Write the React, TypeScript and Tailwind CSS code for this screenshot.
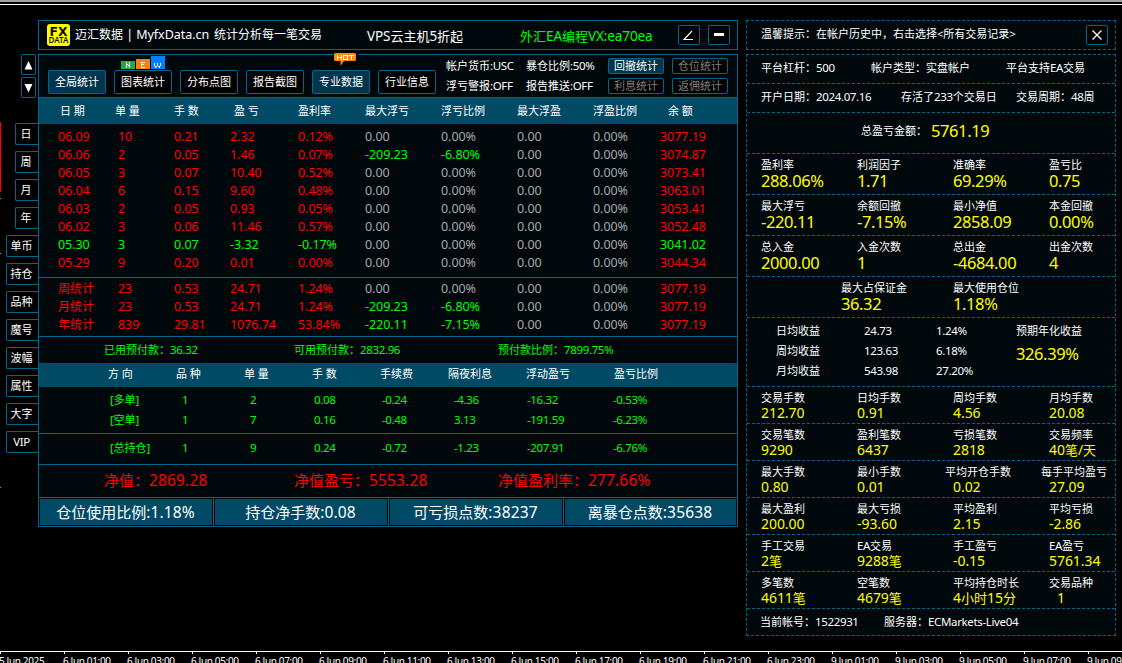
import React from "react";

type Size = "s" | "n" | "m" | "g" | "l" | "x";

const sizes: Record<Size, [string, string]> = {
  s: ["text-[11px]", "text-[11.5px] tracking-[-0.35px]"],
  n: ["text-[12px]", "text-[12.5px] tracking-[-0.05px]"],
  m: ["text-[13px]", "text-[13.5px] tracking-[-0.1px]"],
  g: ["text-[13px]", "text-[14px] tracking-[-0.05px]"],
  l: ["text-[15px]", "text-[15.5px] tracking-[0.15px]"],
  x: ["text-[16px]", "text-[16.5px] tracking-[-0.4px]"],
};

function T({ c, s = "s", className = "" }: { c: string; s?: Size; className?: string }) {
  const [cjk, latin] = sizes[s];
  const parts = c.match(/[\x20-\x7e]+|[^\x20-\x7e]+/g) ?? [];
  return (
    <span className={`block whitespace-pre leading-[18px] ${cjk} ${className}`}>
      {parts.map((p, i) =>
        /^[\x20-\x7e]/.test(p) ? (
          <span key={i} className={latin}>{p}</span>
        ) : (
          <span key={i}>{p}</span>
        )
      )}
    </span>
  );
}

const RED = "text-[#ff0000]";
const GREEN = "text-[#00ff00]";
const GRAY = "text-[#a9a9a9]";

const daily = [
  ["06.09", "10", "0.21", "2.32", "0.12%", "0.00", "0.00%", "3077.19"],
  ["06.06", "2", "0.05", "1.46", "0.07%", "-209.23", "-6.80%", "3074.87"],
  ["06.05", "3", "0.07", "10.40", "0.52%", "0.00", "0.00%", "3073.41"],
  ["06.04", "6", "0.15", "9.60", "0.48%", "0.00", "0.00%", "3063.01"],
  ["06.03", "2", "0.05", "0.93", "0.05%", "0.00", "0.00%", "3053.41"],
  ["06.02", "3", "0.06", "11.46", "0.57%", "0.00", "0.00%", "3052.48"],
  ["05.30", "3", "0.07", "-3.32", "-0.17%", "0.00", "0.00%", "3041.02"],
  ["05.29", "9", "0.20", "0.01", "0.00%", "0.00", "0.00%", "3044.34"],
];

const totals = [
  ["周统计", "23", "0.53", "24.71", "1.24%", "0.00", "0.00%", "3077.19"],
  ["月统计", "23", "0.53", "24.71", "1.24%", "-209.23", "-6.80%", "3077.19"],
  ["年统计", "839", "29.81", "1076.74", "53.84%", "-220.11", "-7.15%", "3077.19"],
];

function DataRow({ r }: { r: string[] }) {
  const main = r[3].startsWith("-") ? GREEN : RED;
  const draw = r[5].startsWith("-") ? GREEN : GRAY;
  const cells = [...r.slice(0, 7), "0.00", "0.00%", r[7]];
  return (
    <div className="grid h-[18px] grid-cols-[60px_56px_56px_68px_67px_76px_76px_76px_67px_70px] pl-[19px]">
      {cells.map((c, i) => (
        <T key={i} c={c} s="n" className={i < 5 || i === 9 ? main : i < 7 ? draw : GRAY} />
      ))}
    </div>
  );
}

function PositionRow({ r }: { r: string[] }) {
  return (
    <div className={`grid h-5 grid-cols-[72px_68px_64px_68px_72px_73px_86px_80px] items-center pl-[71px] ${GREEN}`}>
      {r.map((c, i) => <T key={i} c={c} />)}
    </div>
  );
}

function NavButton({ label, active }: { label: string; active?: boolean }) {
  return (
    <div className={`flex h-6 w-[58px] items-center justify-center rounded-[2px] border border-[#00668a] ${active ? "bg-[#00354e]" : "bg-black"}`}>
      <T c={label} />
    </div>
  );
}

function MiniButton({ label, active }: { label: string; active?: boolean }) {
  return (
    <div className={`flex h-4 w-14 items-center justify-center rounded-[2px] border border-[#00668a] ${active ? "bg-[#00354e]" : "bg-black text-[#808080]"}`}>
      <T c={label} />
    </div>
  );
}

const iconButton = "flex h-5 w-[22px] items-center justify-center rounded-[2px] border border-[#00668a] bg-black";

function Logo() {
  return (
    <svg width="23" height="22" viewBox="0 0 23 22" className="shrink-0">
      <rect width="23" height="22" rx="3" fill="#ffff00" />
      <text x="11.5" y="11.5" textAnchor="middle" fontFamily="DejaVu Sans" fontWeight="bold" fontSize="11.5" textLength="18" lengthAdjust="spacingAndGlyphs" fill="#101010">FX</text>
      <text x="11.5" y="19" textAnchor="middle" fontFamily="Noto Sans" fontWeight="600" fontSize="8.5" textLength="20" lengthAdjust="spacingAndGlyphs" fill="#101010">DATA</text>
    </svg>
  );
}

function NewBadge() {
  return (
    <svg width="44" height="13" viewBox="0 0 44 13" shapeRendering="crispEdges" className="absolute -top-[14px] left-[7px]">
      <rect x="0" y="5" width="14" height="8" fill="#28a745" />
      <rect x="15" y="3" width="14" height="10" fill="#ff7f0e" />
      <rect x="30" y="0" width="14" height="13" fill="#007fff" />
      <g fill="none" stroke="#fff">
        <path d="M5.5 6v6M8.500 6v6M6 8.500h1M7 9.500h1" />
        <path d="M20.500 6v6M20 6.500h4M20 8.500h3M20 11.500h4" />
        <path d="M33.500 7v3M34.500 10v2M35.500 10v1M36.500 7v3M37.500 10v1M38.500 10v2M39.500 7v3" />
      </g>
    </svg>
  );
}

function HotBadge() {
  return (
    <svg width="24" height="15" viewBox="0 0 24 15" className="absolute -top-[17px] left-[22px]">
      <rect width="24" height="15" fill="#000" />
      <path d="M1.500 0h19a1.500 1.500 0 0 1 1.500 1.500v5a1.500 1.500 0 0 1-1.500 1.500H10l-3.500 5V8h-5A1.500 1.500 0 0 1 0 6.500v-5A1.500 1.500 0 0 1 1.500 0z" fill="#ff8c00" />
      <g fill="none" stroke="#fff" shapeRendering="crispEdges">
        <path d="M3.500 2v5M7.500 2v5M4 4.500h3M9.500 2v5M13.500 2v5M10 2.500h3M10 6.500h3M15 2.500h5M17.500 3v4" />
      </g>
    </svg>
  );
}

const tabs = ["日", "周", "月", "年", "单币", "持仓", "品种", "魔号", "波幅", "属性", "大字", "VIP"];

function SideTabs() {
  return (
    <div className="flex w-[38px] flex-col items-end pt-[34px]">
      <div className="mr-[2px] flex flex-col gap-[2px]">
        {["M3.500 8.500h8L7.500 0z", "M3.500 0h8L7.500 8.500z"].map((d) => (
          <div key={d} className="flex h-[21px] w-[15px] items-center justify-center rounded-[2px] border border-[#00668a]">
            <svg width="15" height="9" viewBox="0 0 15 9" className="shrink-0 translate-y-px"><path d={d} fill="#fff" /></svg>
          </div>
        ))}
      </div>
      <div className="mt-[25px] flex flex-col items-end gap-[6px]">
        {tabs.map((t) => (
          <div key={t} className={`flex h-[22px] items-center justify-center rounded-l-[2px] border border-r-0 border-[#00668a] pr-[2px] ${t.length === 1 ? "w-[23px]" : "w-8"}`}>
            <T c={t} />
          </div>
        ))}
      </div>
    </div>
  );
}

function MainPanel() {
  return (
    <div className="flex w-[700px] flex-col">
      <div className="flex h-[30px] items-center border border-[#00668a] bg-[#00080c] pl-2">
        <Logo />
        <T c="迈汇数据 | MyfxData.cn" s="n" className="ml-[6px] w-[138px] -translate-x-px" />
        <T c="统计分析每一笔交易" s="n" className="w-[153px]" />
        <T c="VPS云主机5折起" s="m" className="mt-[2px] w-[153px]" />
        <T c="外汇EA编程VX:ea70ea" s="m" className={`mt-[2px] w-[158px] ${GREEN}`} />
        <div className={iconButton}>
          <svg width="20" height="18" viewBox="0 0 20 18"><path d="M13 5L5 13.500h9" fill="none" stroke="#fff" strokeWidth="1.100" /></svg>
        </div>
        <div className={`ml-2 ${iconButton}`}>
          <div className="mb-px h-[3px] w-[10px] bg-white" />
        </div>
      </div>

      <div className="mt-1 flex h-[473px] flex-col border border-[#00668a] bg-[#00080c]">
        <div className="flex h-[42px] pl-[9px]">
          <div className="mt-[15px] flex gap-2">
            <NavButton label="全局统计" active />
            <div className="relative"><NavButton label="图表统计" /><NewBadge /></div>
            <NavButton label="分布点图" />
            <NavButton label="报告截图" />
            <div className="relative"><NavButton label="专业数据" active /><HotBadge /></div>
            <NavButton label="行业信息" />
          </div>
          <div className="ml-[10px] mt-[2px] grid h-10 grid-cols-[80px_82px] grid-rows-[20px_20px]">
            <T c="帐户货币:USC" /><T c="暴仓比例:50%" />
            <T c="浮亏警报:OFF" /><T c="报告推送:OFF" />
          </div>
          <div className="mt-[3px] grid h-9 grid-cols-[56px_56px] gap-x-2 gap-y-1">
            <MiniButton label="回撤统计" active /><MiniButton label="仓位统计" />
            <MiniButton label="利息统计" /><MiniButton label="返佣统计" />
          </div>
        </div>

        <div className="grid h-[27px] grid-cols-[55px_59px_60px_64px_67px_76px_76px_76px_75px_60px] items-center border-t border-[#00668a] bg-[#004a66] pb-px pl-[21px]">
          {["日 期", "单 量", "手 数", "盈 亏", "盈利率", "最大浮亏", "浮亏比例", "最大浮盈", "浮盈比例", "余 额"].map((h) => <T key={h} c={h} />)}
        </div>
        <div className="h-[153px] pt-[4px]">{daily.map((r) => <DataRow key={r[0]} r={r} />)}</div>
        <div className="h-[59px] border-t border-[#00668a] pt-[2px]">{totals.map((r) => <DataRow key={r[0]} r={r} />)}</div>

        <div className={`grid h-[27px] grid-cols-[190px_204px_200px] items-center border-t border-[#00668a] pl-[65px] ${GREEN}`}>
          <T c="已用预付款：36.32" /><T c="可用预付款：2832.96" /><T c="预付款比例：7899.75%" />
        </div>
        <div className="grid h-6 grid-cols-[68px_68px_68px_68px_68px_78px_88px_80px] items-center bg-[#004a66] pb-[2px] pl-[69px]">
          {["方 向", "品 种", "单 量", "手 数", "手续费", "隔夜利息", "浮动盈亏", "盈亏比例"].map((h) => <T key={h} c={h} />)}
        </div>
        <div className="h-[46px] pt-[3px]">
          <PositionRow r={["[多单]", "1", "2", "0.08", "-0.24", "-4.36", "-16.32", "-0.53%"]} />
          <PositionRow r={["[空单]", "1", "7", "0.16", "-0.48", "3.13", "-191.59", "-6.23%"]} />
        </div>
        <div className="h-[31px] border-t border-[#00668a] pt-1">
          <PositionRow r={["[总持仓]", "1", "9", "0.24", "-0.72", "-1.23", "-207.91", "-6.76%"]} />
        </div>
        <div className={`grid h-[33px] grid-cols-[190px_204px_220px] items-center border-t border-[#00668a] pb-[2px] pl-[65px] ${RED}`}>
          <T c="净值：2869.28" s="l" /><T c="净值盈亏：5553.28" s="l" /><T c="净值盈利率：277.66%" s="l" />
        </div>
        <div className="grid h-[29px] grid-cols-[175px_175px_175px_173px] border-t border-[#00668a] bg-black">
          {["仓位使用比例:1.18%", "持仓净手数:0.08", "可亏损点数:38237", "离暴仓点数:35638"].map((c) => (
            <div key={c} className="border-r border-[#00668a] p-px last:border-r-0">
              <div className="flex h-full items-center justify-center bg-[#004a66] pb-px pr-px"><T c={c} s="l" /></div>
            </div>
          ))}
        </div>
      </div>
    </div>
  );
}

const metrics = [
  ["盈利率", "288.06%", "利润因子", "1.71", "准确率", "69.29%", "盈亏比", "0.75"],
  ["最大浮亏", "-220.11", "余额回撤", "-7.15%", "最小净值", "2858.09", "本金回撤", "0.00%"],
  ["总入金", "2000.00", "入金次数", "1", "总出金", "-4684.00", "出金次数", "4"],
];

const trades = [
  ["交易手数", "212.70", "日均手数", "0.91", "周均手数", "4.56", "月均手数", "20.08"],
  ["交易笔数", "9290", "盈利笔数", "6437", "亏损笔数", "2818", "交易频率", "40笔/天"],
  ["最大手数", "0.80", "最小手数", "0.01", "平均开仓手数", "0.02", "每手平均盈亏", "27.09"],
  ["最大盈利", "200.00", "最大亏损", "-93.60", "平均盈利", "2.15", "平均亏损", "-2.86"],
  ["手工交易", "2笔", "EA交易", "9288笔", "手工盈亏", "-0.15", "EA盈亏", "5761.34"],
  ["多笔数", "4611笔", "空笔数", "4679笔", "平均持仓时长", "4小时15分", "交易品种", "1"],
];

const line = "border-t border-dashed border-[#00668a]";
const YELLOW = "text-[#ffff00]";

function Metric({ label, value, small }: { label: string; value: string; small?: boolean }) {
  const shift = label === "平均开仓手数" || label === "每手平均盈亏" ? "-ml-2" : "";
  return (
    <div className="flex w-24 shrink-0 flex-col">
      <div className={`${small ? "h-[15px]" : "h-4"} ${shift}`}><T c={label} /></div>
      <T c={value} s={small ? "g" : "x"} className={`${YELLOW} ${label === "交易品种" ? "pl-2" : ""}`} />
    </div>
  );
}

function MetricRow({ r, small }: { r: string[]; small?: boolean }) {
  return (
    <div className={`flex pl-[14px] ${line} ${small ? "h-[37px] pt-[2px]" : "h-[41px] pt-[2px]"}`}>
      {[0, 2, 4, 6].map((i) => <Metric key={i} label={r[i]} value={r[i + 1]} small={small} />)}
    </div>
  );
}

function SidePanel() {
  return (
    <div className="ml-2 flex w-[370px] flex-col">
      <div className="flex h-[30px] items-center justify-between border border-dashed border-[#00668a] bg-[#00080c] pl-[14px] pr-[7px]">
        <T c="温馨提示：在帐户历史中，右击选择<所有交易记录>" className="-mt-[2px]" />
        <div className={iconButton}>
          <svg width="10" height="10" viewBox="0 0 10 10"><path d="M.5.500l9 9M9.500.500l-9 9" stroke="#fff" strokeWidth="1.300" /></svg>
        </div>
      </div>
      <div className="mt-1 flex h-[582px] flex-col border border-dashed border-[#00668a] bg-[#00080c]">
        <div className="grid h-7 grid-cols-[110px_135px_100px] items-center pb-[2px] pl-[14px]">
          <T c="平台杠杆：500" /><T c="帐户类型：实盘帐户" /><T c="平台支持EA交易" />
        </div>
        <div className={`grid h-[29px] grid-cols-[140px_115px_90px] items-center pb-[2px] pl-[14px] ${line}`}>
          <T c="开户日期：2024.07.16" /><T c="存活了233个交易日" /><T c="交易周期：48周" />
        </div>
        <div className={`flex h-[41px] items-center pb-[4px] pl-[114px] ${line}`}>
          <T c="总盈亏金额：" className="w-[70px]" /><T c="5761.19" s="x" className={YELLOW} />
        </div>
        {metrics.map((r) => <MetricRow key={r[0]} r={r} />)}
        <div className={`flex h-[41px] gap-4 pl-[94px] pt-[2px] ${line}`}>
          <Metric label="最大占保证金" value="36.32" />
          <Metric label="最大使用仓位" value="1.18%" />
        </div>
        <div className={`flex h-[69px] pl-[29px] pt-[3px] ${line}`}>
          <div className="grid h-[60px] grid-cols-[88px_72px_80px] grid-rows-[20px_20px_20px] items-center">
            <T c="日均收益" /><T c="24.73" /><T c="1.24%" />
            <T c="周均收益" /><T c="123.63" /><T c="6.18%" />
            <T c="月均收益" /><T c="543.98" /><T c="27.20%" />
          </div>
          <div className="flex flex-col gap-[5px] pt-px">
            <T c="预期年化收益" />
            <T c="326.39%" s="x" className={YELLOW} />
          </div>
        </div>
        {trades.map((r) => <MetricRow key={r[0]} r={r} small />)}
        <div className={`flex h-[27px] items-center pl-[13px] ${line}`}>
          <T c="当前帐号：1522931" className="w-[124px]" /><T c="服务器：ECMarkets-Live04" />
        </div>
      </div>
    </div>
  );
}

const hours = ["01", "03", "05", "07", "09", "11", "13", "15", "17", "19", "21", "23"];
const axis = ["5 Jun 2025", ...hours.map((h) => `6 Jun ${h}:00`), ...hours.slice(0, 5).map((h) => `9 Jun ${h}:00`)];

export default function App() {
  return (
    <div
      lang="zh-CN"
      className="relative flex h-[663px] w-[1122px] flex-col overflow-hidden bg-black font-['Noto_Sans','Noto_Sans_CJK_SC',sans-serif] text-white"
    >
      <div className="h-[2px] shrink-0 bg-[#a0a0a0]" />
      <div className="mt-[2px] h-px shrink-0 bg-white" />
      <div className="mt-[15px] flex h-[631px] shrink-0">
        <SideTabs />
        <MainPanel />
        <SidePanel />
      </div>
      <div className="flex h-3 shrink-0 overflow-hidden border-t border-white">
        {axis.map((a) => (
          <div key={a} className="w-16 shrink-0">
            <div className="h-[2px] w-px bg-white" />
            <div className="-ml-px whitespace-pre text-[10px] leading-[14px] tracking-[-0.36px]">{a}</div>
          </div>
        ))}
      </div>
      <div className="absolute left-0 top-[122px] h-[70px] w-px bg-[#ff0000]" />
      <div className="absolute left-0 top-[198px] h-px w-px bg-[#00ff00]" />
      <div className="absolute left-0 top-[253px] h-px w-px bg-[#a0a0a0]" />
      <div className="absolute left-0 top-[487px] h-px w-px bg-[#00ff00]" />
    </div>
  );
}
